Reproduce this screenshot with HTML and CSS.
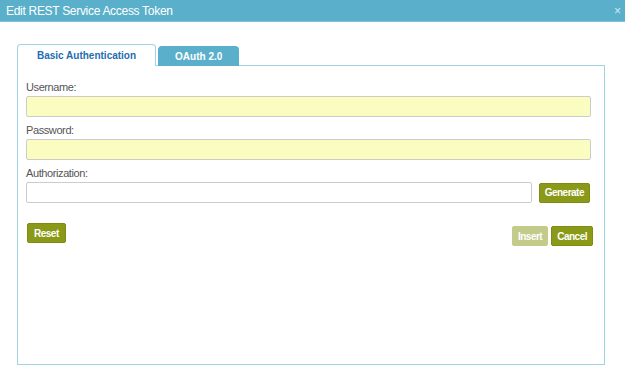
FILE: index.html
```html
<!DOCTYPE html>
<html>
<head>
  <meta charset="UTF-8">
  <title>Edit REST Service Access Token</title>
  <link rel="stylesheet" href="styles.css">
</head>
<body>
  <div class="dialog">
    <div class="titlebar">
      <span class="title">Edit REST Service Access Token</span>
      <span class="close">&times;</span>
    </div>

    <div class="content">
      <div class="tabs">
        <div class="tab active">Basic Authentication</div>
        <div class="tab">OAuth 2.0</div>
      </div>

      <div class="panel">
        <div class="field">
          <label for="username">Username:</label>
          <input type="text" id="username" class="required">
        </div>

        <div class="field">
          <label for="password">Password:</label>
          <input type="password" id="password" class="required">
        </div>

        <div class="field">
          <label for="auth">Authorization:</label>
          <div class="auth-row">
            <input type="text" id="auth">
            <button class="button">Generate</button>
          </div>
        </div>

        <div class="actions">
          <button class="button reset">Reset</button>
          <div class="action-buttons">
            <button class="button" disabled>Insert</button>
            <button class="button">Cancel</button>
          </div>
        </div>
      </div>
    </div>
  </div>
</body>
</html>
```

FILE: styles.css
```css
body {
  font-family: "Liberation Sans", Arial, sans-serif;
  margin: 0;
  padding: 0;
  width: 625px;
  height: 382px;
  background: #fff;
}
.dialog {
  height: 382px;
}
.titlebar {
  height: 21px;
  background-color: #5aafca;
  border-bottom: 1px solid #7fc2d8;
  display: flex;
  align-items: center;
  justify-content: space-between;
  padding: 0 4px 0 6px;
}
.title {
  color: #fff;
  font-size: 12px;
  letter-spacing: -0.3px;
}
.close {
  color: #cfe9f1;
  font-size: 12px;
  line-height: 12px;
}
.content {
  padding: 22px 20px 0 17px;
}
.tabs {
  display: flex;
  align-items: flex-end;
  gap: 2px;
  height: 22px;
  margin-bottom: -1px;
}
.tab {
  font-size: 10px;
  font-weight: bold;
  padding: 0 16px;
  height: 20px;
  line-height: 20px;
  border: 1px solid #5aafca;
  border-bottom: none;
  border-radius: 4px 4px 0 0;
  background-color: #5aafca;
  color: #fff;
  box-sizing: border-box;
}
.tab.active {
  padding: 0 19px;
  height: 22px;
  line-height: 22px;
  background-color: #fff;
  color: #1e6db2;
  border-color: #a0d3e3;
  position: relative;
  z-index: 1;
}
.panel {
  height: 300px;
  box-sizing: border-box;
  border: 1px solid #a0d3e3;
  padding: 14px 13px 0 8px;
}
.field {
  margin-bottom: 6px;
}
label {
  display: block;
  font-size: 11px;
  line-height: 14px;
  letter-spacing: -0.4px;
  color: #555;
  margin-bottom: 2px;
}
input[type="text"], input[type="password"] {
  display: block;
  width: 100%;
  height: 21px;
  box-sizing: border-box;
  border: 1px solid #cccccc;
  border-radius: 2px;
  padding: 2px 4px;
  font-size: 11px;
  background: #fff;
  margin: 0;
}
input.required {
  background-color: #fafcc0;
}
.auth-row {
  display: flex;
  gap: 7px;
  align-items: center;
}
.auth-row input[type="text"] {
  flex: 1;
}
.auth-row .button {
  margin-right: 1px;
}
.button {
  font-family: "Liberation Sans", Arial, sans-serif;
  font-size: 10px;
  font-weight: bold;
  letter-spacing: -0.5px;
  color: #fff;
  background-color: #8a9a18;
  border: 1px solid #7e8d12;
  border-radius: 2px;
  height: 20px;
  padding: 0 5px;
  cursor: pointer;
}
.button:disabled {
  background-color: #c3cb8b;
  border-color: #c3cb8b;
  cursor: default;
}
.reset {
  padding: 0 6px;
  margin-left: 1px;
}
.actions {
  display: flex;
  justify-content: space-between;
  align-items: flex-start;
  margin-top: 20px;
}
.action-buttons {
  display: flex;
  gap: 3px;
  margin-top: 3px;
  margin-right: -2px;
}
```
